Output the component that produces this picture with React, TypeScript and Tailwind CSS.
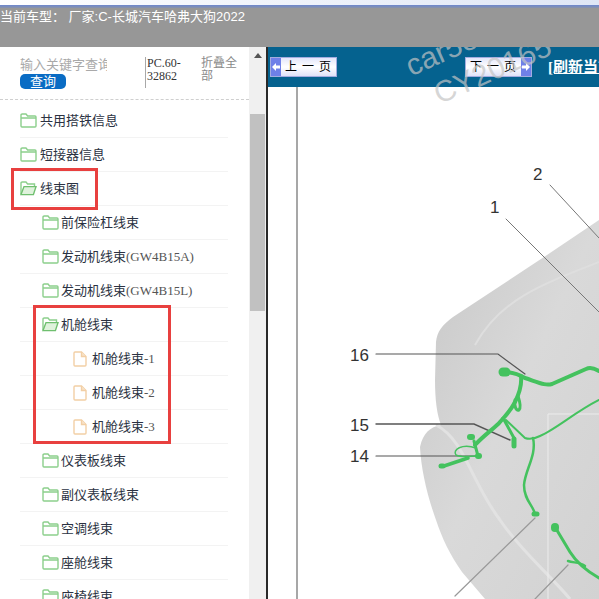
const CJK = 'font-["Liberation_Serif","Noto_Sans_CJK_SC",serif]';

type Row = { label: string; suffix?: string; level: 0 | 1 | 2; open?: boolean };

const rows: Row[] = [
  { label: '共用搭铁信息', level: 0 },
  { label: '短接器信息', level: 0 },
  { label: '线束图', level: 0, open: true },
  { label: '前保险杠线束', level: 1 },
  { label: '发动机线束', suffix: '(GW4B15A)', level: 1 },
  { label: '发动机线束', suffix: '(GW4B15L)', level: 1 },
  { label: '机舱线束', level: 1, open: true },
  { label: '机舱线束', suffix: '-1', level: 2 },
  { label: '机舱线束', suffix: '-2', level: 2 },
  { label: '机舱线束', suffix: '-3', level: 2 },
  { label: '仪表板线束', level: 1 },
  { label: '副仪表板线束', level: 1 },
  { label: '空调线束', level: 1 },
  { label: '座舱线束', level: 1 },
  { label: '座椅线束', level: 1 },
];

const FolderIcon = ({ open }: { open?: boolean }) => (
  <svg width="17" height="15" viewBox="0 0 17 15" fill="none" stroke="#8ccf8c" strokeWidth="1.4" className="shrink-0">
    {open ? (
      <>
        <path d="M1 13V2.2C1 1.5 1.5 1 2.2 1H6L7.6 3H14.5V5.5" fill="#fff" />
        <path d="M1 13.6L4 5.6H16L13.4 13.6Z" fill="#dff2dc" stroke="#6fbf6f" />
      </>
    ) : (
      <path d="M1 13V2.2C1 1.5 1.5 1 2.2 1H6L7.6 3H15C15.6 3 16 3.4 16 4V13C16 13.6 15.6 14 15 14H2C1.4 14 1 13.6 1 13ZM1 5H16" />
    )}
  </svg>
);

const FileIcon = () => (
  <svg width="14" height="16" viewBox="0 0 14 16" fill="none" stroke="#f2cfa5" strokeWidth="1.4" className="shrink-0">
    <path d="M1 2C1 1.4 1.4 1 2 1H8.5L13 5.5V14C13 14.6 12.6 15 12 15H2C1.4 15 1 14.6 1 14Z" />
    <path d="M8.5 1V5.5H13" fill="#f8e3ca" />
  </svg>
);

const TreeRow = ({ row }: { row: Row }) => {
  const indent = row.level === 0 ? 'pl-0 gap-[3px]' : row.level === 1 ? 'pl-[22px] gap-[2px]' : 'pl-[53px] gap-[5px]';
  return (
    <div className={`flex h-[34px] w-[208px] shrink-0 items-center border-b border-[#f3f3f3] text-[13px] text-[#2b3242] ${indent}`}>
      {row.level === 2 ? <FileIcon /> : <FolderIcon open={row.open} />}
      <span className="whitespace-nowrap">
        {row.label}
        {row.suffix && <span className="text-[#555]">{row.suffix}</span>}
      </span>
    </div>
  );
};

const PageButton = ({ label, next }: { label: string; next?: boolean }) => (
  <div className={`flex h-[20px] w-[67px] shrink-0 items-center border border-[#a3acdf] bg-gradient-to-b from-[#e3e6fa] via-white to-[#dfe2f8] ${next ? 'flex-row-reverse' : ''}`}>
    <div className="flex h-full w-[10px] shrink-0 items-center justify-center bg-[#6f80e8]">
      <svg width="8" height="8" viewBox="0 0 8 8" fill="#fff">
        {next ? <path d="M0 2.5H4V0L8 4L4 8V5.5H0Z" /> : <path d="M8 2.5H4V0L0 4L4 8V5.5H8Z" />}
      </svg>
    </div>
    <span className="flex-1 text-center text-[12px] leading-none tracking-[1px] whitespace-pre text-black">{label}</span>
  </div>
);

const Diagram = () => (
  <svg viewBox="268 87 331 512" className="h-full w-full">
    <defs>
      <linearGradient id="body" x1="0" y1="0" x2="1" y2="1">
        <stop offset="0" stopColor="#c6c6c6" />
        <stop offset="0.5" stopColor="#d9d9d9" />
        <stop offset="1" stopColor="#d2d2d2" />
      </linearGradient>
    </defs>
    <line x1="297" y1="87" x2="297" y2="599" stroke="#8a8a8a" strokeWidth="1.5" />
    <path
      d="M599 220L547 255L453 317C442 325 437 332 436 342L435 380C435 400 437 415 441 425C430 427 423 433 420 447C421 470 428 498 436 520C442 538 450 555 462 572L485 599H599Z"
      fill="url(#body)"
    />
    <path d="M436 425C465 440 470 480 500 520C520 550 550 575 570 599" fill="none" stroke="#e2e2e2" strokeWidth="3" />
    <path d="M475 345C500 300 540 285 599 262" fill="none" stroke="#dedede" strokeWidth="2" />
    <path d="M548 599V414H599" fill="none" stroke="#ececec" strokeWidth="1" />

    {/* leader lines */}
    <g fill="none" strokeLinecap="round">
      <path d="M550 185L599 238" stroke="#777" strokeWidth="1" />
      <path d="M506 219L599 312" stroke="#777" strokeWidth="1" />
      <path d="M376 354H498L525 374" stroke="#555" strokeWidth="1.2" />
      <path d="M376 424H474L510 440" stroke="#555" strokeWidth="1.4" />
      <path d="M376 456H476" stroke="#555" strokeWidth="1.2" />
      <path d="M535 518L455 596" stroke="#999" strokeWidth="1.2" />
      <path d="M568 565L535 599" stroke="#999" strokeWidth="1.2" />
    </g>

    {/* harness */}
    <g fill="none" stroke="#44c25e" strokeLinecap="round" strokeLinejoin="round">
      <path d="M599 371C594 368 590 367 586 369L552 384C546 386 540 383 525 378C520 375 512 372 504 372" strokeWidth="4" />
      <path d="M503 372H506" strokeWidth="9" />
      <path d="M521 376C522 385 520 392 515 402C510 412 505 416 500 422C495 428 485 434 475 445" strokeWidth="4" />
      <path d="M515 400C514 406 516 411 519 410C521 408 520 402 518 396" strokeWidth="3" />
      <path d="M503 418L514 438" strokeWidth="3" />
      <path d="M514 439V446" strokeWidth="5" />
      <path d="M506 420L525 438C530 440 534 439 540 436C555 430 575 412 599 400" strokeWidth="2" />
      <path d="M533 438C537 455 525 470 524 485C524 500 533 505 535 514" strokeWidth="2.5" />
      <path d="M534 514H537" strokeWidth="5" />
      <path d="M470 437H472" strokeWidth="6" />
      <path d="M474 441L478 456" strokeWidth="3" />
      <path d="M478 456H479" strokeWidth="6" />
      <path d="M476 448C462 443 452 450 456 455C462 458 470 456 478 456" strokeWidth="1.5" />
      <path d="M468 458L444 466" strokeWidth="3.5" />
      <path d="M441 466H443" strokeWidth="5" />
      <path d="M555 527L570 552C575 560 585 570 599 578" strokeWidth="3" />
      <path d="M555 527V528" strokeWidth="8" />
      <path d="M568 561C574 563 580 562 585 566" strokeWidth="2.5" />
    </g>

    <g fontFamily="Liberation Sans, sans-serif" fontSize="17" fill="#333">
      <text x="533" y="180">2</text>
      <text x="490" y="213">1</text>
      <text x="350" y="361">16</text>
      <text x="350" y="431">15</text>
      <text x="350" y="462">14</text>
    </g>
  </svg>
);

export default function App() {
  return (
    <div className={`relative flex h-[599px] w-[599px] flex-col overflow-hidden bg-white ${CJK}`}>
      {/* window top strip */}
      <div className="h-[5px] shrink-0 bg-gradient-to-r from-white to-[#dfe6f5]" />
      <div className="h-[3px] shrink-0 bg-gradient-to-b from-[#6c86cf] to-[#8a93a8]" />

      {/* current vehicle */}
      <div className='h-[39px] shrink-0 bg-[#979797] font-["Liberation_Sans","Noto_Sans_CJK_SC",sans-serif] text-[13px] leading-[17px] whitespace-pre text-white'>
        当前车型： 厂家:C-长城汽车哈弗大狗2022
      </div>

      <div className="flex min-h-0 flex-1">
        {/* left tree */}
        <div className="flex w-[249px] shrink-0 flex-col overflow-hidden">
          <div className="flex h-[53px] shrink-0 border-b border-dashed border-[#cfcfcf] pl-5">
            <div className="flex w-[87px] flex-col items-start pt-2">
              <div className="h-[19px] w-[87px] overflow-hidden text-[13px] leading-[19px] whitespace-nowrap text-[#a9a9a9]">
                输入关键字查询
              </div>
              <div className="flex h-[15px] w-[46px] items-center justify-center rounded-[5px] bg-[#0a6cc4] text-[13px] leading-none text-white">
                查询
              </div>
            </div>
            <div className="mt-[10px] ml-[38px] h-[31px] w-[50px] border-l border-[#a8a8a8] pl-px text-[12px] leading-[13px] text-[#333]">
              PC.60-
              <br />
              32862
            </div>
            <div className="mt-[10px] ml-[6px] w-[38px] text-[12px] leading-[13px] text-[#8a8a8a]">折叠全部</div>
          </div>
          <div className="flex flex-col pt-1 pl-5">
            {rows.map((row, i) => (
              <TreeRow key={i} row={row} />
            ))}
          </div>
        </div>

        {/* scrollbar */}
        <div className="flex w-[17px] shrink-0 flex-col items-center bg-[#f0f0f0] pt-[6px]">
          <div className="h-0 w-0 border-x-[4px] border-b-[5px] border-x-transparent border-b-[#555]" />
          <div className="mt-[56px] h-[197px] w-[15px] bg-[#c1c1c1]" />
        </div>
        <div className="w-[2px] shrink-0 bg-[#2a2a2a]" />

        {/* document */}
        <div className="relative flex min-w-0 flex-1 flex-col overflow-hidden">
          <div className="flex h-10 shrink-0 items-center overflow-hidden bg-[#05628f] pl-[2px] whitespace-nowrap">
            <PageButton label="上 一 页" />
            <div className="ml-[128px] shrink-0">
              <PageButton label="下 一 页" next />
            </div>
            <span className="ml-[16px] shrink-0 text-[15px] font-bold text-white underline">[刷新当前页]</span>
          </div>
          <div className="min-h-0 flex-1">
            <Diagram />
          </div>
          {/* watermark */}
          <span className="absolute -top-[10px] left-[136px] -rotate-[24deg] font-['Liberation_Sans'] text-[30px] leading-none text-[#c4c4c4]/70">
            car5e
          </span>
          <span className="absolute top-[8px] left-[162px] -rotate-[24deg] font-['Liberation_Sans'] text-[30px] leading-none text-[#c4c4c4]/70">
            CY20165
          </span>
        </div>
      </div>

      {/* red highlight boxes */}
      <div className="absolute top-[168px] left-[11px] h-[42px] w-[87px] border-[3px] border-[#e8403f]" />
      <div className="absolute top-[305px] left-[33px] h-[139px] w-[138px] border-[3px] border-[#e8403f]" />
    </div>
  );
}
